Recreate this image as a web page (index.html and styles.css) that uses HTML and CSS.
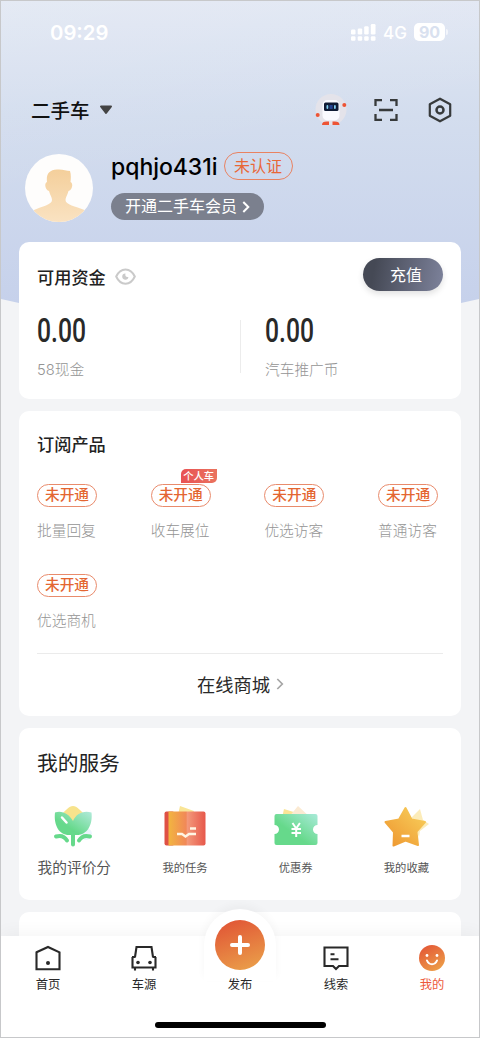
FILE: index.html
```html
<!DOCTYPE html>
<html lang="zh-CN">
<head>
<meta charset="utf-8">
<title>我的</title>
<link rel="stylesheet" href="styles.css">
</head>
<body>
<div class="phone">
  <div class="backdrop"></div>

  <header class="status">
    <span class="clock">09:29</span>
    <div class="status-right">
      <svg class="signal" width="25" height="17" viewBox="0 0 25 17" fill="#fff">
        <rect x="0" y="5.500" width="4.500" height="5" rx="1.200"/><rect x="6.700" y="4.500" width="4.500" height="6" rx="1.200"/><rect x="13.200" y="2.300" width="4.500" height="8.200" rx="1.200"/><rect x="19.800" y="0" width="4.700" height="10.500" rx="1.200"/>
        <rect x="0" y="12.300" width="4.500" height="4.400" rx="1.200"/><rect x="6.700" y="12.300" width="4.500" height="4.400" rx="1.200"/><rect x="13.200" y="12.300" width="4.500" height="4.400" rx="1.200"/><rect x="19.800" y="12.300" width="4.700" height="4.400" rx="1.200"/>
      </svg>
      <span class="network">4G</span>
      <span class="battery">90</span><i class="battery-tip"></i>
    </div>
  </header>

  <div class="topbar">
    <div class="category"><span>二手车</span>
      <svg width="14" height="10" viewBox="0 0 14 10"><path d="M2 1.500H12L7 8z" fill="#444" stroke="#444" stroke-width="2" stroke-linejoin="round"/></svg>
    </div>
    <div class="tools">
      <svg width="32" height="34" viewBox="0 0 32 34">
        <circle cx="16" cy="16.500" r="15.500" fill="#e4e3ea"/>
        <rect x="7.500" y="7" width="17" height="20.500" rx="5" fill="#fafaff"/>
        <rect x="9" y="9.500" width="14.500" height="8.500" rx="1.500" fill="#101b35"/>
        <rect x="11.500" y="12" width="1.800" height="4" rx=".9" fill="#83cff2"/><rect x="14.500" y="12" width="3.200" height="4" fill="#244291"/><rect x="19" y="12" width="1.800" height="4" rx=".9" fill="#83cff2"/>
        <circle cx="29.300" cy="12" r="2" fill="#ed5435"/><circle cx="2.700" cy="22" r="2" fill="#ed5435"/>
        <path d="M7 32c0-3 2-4 7-3.500V32zM17.500 28.500c5-.5 7 .5 7 3.500h-7z" fill="#ed5435"/>
      </svg>
      <svg width="24" height="24" viewBox="0 0 24 24" fill="none" stroke="#373a3b" stroke-width="2.300"><path d="M1.500 8V2.200H8M16 2.200h6.500V8M22.500 16v5.800H16M8 21.800H1.500V16M5 12h14"/></svg>
      <svg width="24" height="26" viewBox="0 0 24 26" fill="none" stroke="#373a3b" stroke-width="2.200"><path d="M12 1.700 22.200 7.300v11.400L12 24.300 1.800 18.700V7.300z" stroke-linejoin="round"/><circle cx="12" cy="13" r="3.500" stroke-width="2.500"/></svg>
    </div>
  </div>

  <section class="profile">
    <svg class="avatar" width="68" height="68" viewBox="0 0 68 68">
      <defs>
        <linearGradient id="skin" x1="0" y1="0" x2="0" y2="1"><stop offset="0" stop-color="#f4cf9b"/><stop offset="1" stop-color="#fae3c3"/></linearGradient>
        <clipPath id="round"><circle cx="34" cy="34" r="34"/></clipPath>
      </defs>
      <circle cx="34" cy="34" r="34" fill="#fefdfc"/>
      <path clip-path="url(#round)" d="M9 56c8-4 18-5 18-10 0-3-2-5-3-9-4-1-5-8-2-9-1-8 2-12 10-12.500 6-.5 9 1.500 13 1.500 1 3 1 7 .5 11 3 1 2 8-2 9-1 4-3 6-3 9 0 5 10 6 19 10v14H9z" fill="url(#skin)"/>
    </svg>
    <div class="identity">
      <div class="name-row"><span class="name">pqhjo431i</span><span class="verify">未认证</span></div>
      <div class="member">开通二手车会员
        <svg width="8" height="12" viewBox="0 0 8 12" fill="none" stroke="#fff" stroke-width="2"><path d="M1.300 1 6.300 6l-5 5"/></svg>
      </div>
    </div>
  </section>

  <main class="cards">
    <section class="card funds">
      <div class="funds-head">
        <h2 class="title">可用资金</h2>
        <svg class="eye" width="21" height="17" viewBox="0 0 21 17" fill="none"><path d="M1.200 8.500C5.500-1 15.500-1 19.800 8.500 15.500 18 5.500 18 1.200 8.500z" stroke="#cacaca" stroke-width="2"/><path d="M10.500 5.500A3.100 3.100 0 1 0 13.400 9C11 9.500 9.800 8 10.500 5.500z" fill="#cacaca"/></svg>
        <span class="recharge">充值</span>
      </div>
      <div class="balances">
        <div class="balance"><span class="amount">0.00</span><span class="unit">58现金</span></div>
        <div class="balance second"><span class="amount">0.00</span><span class="unit">汽车推广币</span></div>
      </div>
    </section>

    <section class="card products">
      <h2 class="title">订阅产品</h2>
      <div class="product-grid">
        <div class="product"><span class="state">未开通</span><span class="label">批量回复</span></div>
        <div class="product"><span class="state">未开通<b class="tag">个人车</b></span><span class="label">收车展位</span></div>
        <div class="product"><span class="state">未开通</span><span class="label">优选访客</span></div>
        <div class="product"><span class="state">未开通</span><span class="label">普通访客</span></div>
        <div class="product"><span class="state">未开通</span><span class="label">优选商机</span></div>
      </div>
      <div class="mall">在线商城
        <svg width="8" height="12" viewBox="0 0 8 12" fill="none" stroke="#a5a5a5" stroke-width="1.700"><path d="M1.300 1 6.300 6l-5 5"/></svg>
      </div>
    </section>

    <section class="card services">
      <h2 class="title big">我的服务</h2>
      <div class="service-grid">
        <div class="service">
          <svg class="flower" width="44" height="44" viewBox="0 0 44 44">
            <defs><linearGradient id="leaf" x1="0" y1="1" x2="1" y2="0"><stop offset=".35" stop-color="#66d98b"/><stop offset="1" stop-color="#b2eadb"/></linearGradient></defs>
            <path d="M11 11c3-3 7-8 11-8s8 5 11 8l-10 13z" fill="#f7e38c"/><circle cx="35" cy="31" r="6" fill="#edf4fd"/>
            <path d="M22 18C25 11 32 7 40.500 9.500 42 22 36 32 26 32h-8C8 32 2.500 22 4 9.500 11 7 18 11 22 18z" fill="url(#leaf)"/>
            <path d="M22 30v11.500M5 33.500c5-1.500 9 .5 11 4M39 33.500c-5-1.500-9 .5-11 4" fill="none" stroke="#66d98b" stroke-width="4" stroke-linecap="round"/>
            <path d="m11 14.500 4.500 5" stroke="#fff" stroke-width="2.500" stroke-linecap="round"/>
          </svg>
          <span class="service-name wide">我的评价分</span>
        </div>
        <div class="service">
          <svg width="44" height="44" viewBox="0 0 44 44">
            <defs><linearGradient id="book"><stop stop-color="#f2b540"/><stop offset=".48" stop-color="#f18858"/><stop offset=".5" stop-color="#f39a7b"/><stop offset="1" stop-color="#e7584b"/></linearGradient></defs>
            <path d="m17 3 14 5-3 8H14z" fill="#f9e596"/><rect x="1.500" y="8.500" width="10" height="34" rx="2" fill="#df5145"/><path d="M6 8.500H40.500a2 2 0 0 1 2 2V40.500a2 2 0 0 1-2 2H5.500V8.500z" fill="url(#book)"/>
            <path d="M14 31h5l3.500 2.500L26 31h7M27 25.500h6" fill="none" stroke="#fff6e4" stroke-width="2.300"/>
          </svg>
          <span class="service-name">我的任务</span>
        </div>
        <div class="service">
          <svg width="44" height="44" viewBox="0 0 44 44">
            <defs><linearGradient id="ticket" x1="0" y1="1" x2="1" y2="0"><stop offset=".4" stop-color="#66d98b"/><stop offset="1" stop-color="#a9ead9"/></linearGradient></defs>
            <path d="M10 6 26 11 8 15z" fill="#f9e596"/><path d="m24 3 13 12H14z" fill="#fbead2"/>
            <path d="M3 11H41.500a2 2 0 0 1 2 2V22a4.500 4.500 0 0 0 0 9v9a2 2 0 0 1-2 2H2.500a2 2 0 0 1-2-2V31a4.500 4.500 0 0 0 0-9V13a2 2 0 0 1 2-2z" fill="url(#ticket)"/>
            <path d="m18.500 20 3.700 5.500 3.700-5.500M17.500 26h9.500M17.500 30h9.500M22.200 25v9" fill="none" stroke="#fff" stroke-width="2"/>
          </svg>
          <span class="service-name">优惠券</span>
        </div>
        <div class="service">
          <svg width="44" height="44" viewBox="0 0 44 44" overflow="visible">
            <defs><linearGradient id="star" x1="1" y1="0" x2="0" y2="1"><stop offset=".1" stop-color="#f7cb58"/><stop offset="1" stop-color="#ee952f"/></linearGradient></defs>
            <path d="m27 15 9-9 3 11 6 4-9 7-1 6z" fill="#fbe5a2" opacity=".75"/>
            <path d="m21.500 5 6 11.500L41 19l-8.500 9.500L34 42l-12.500-4.500L9.500 42.500l.5-13.500L1.500 19 15 16.500z" fill="url(#star)" stroke="url(#star)" stroke-width="2" stroke-linejoin="round"/>
            <path d="M17.500 33h8" stroke="#fff" stroke-width="2.500"/>
          </svg>
          <span class="service-name">我的收藏</span>
        </div>
      </div>
    </section>
    <section class="card next"></section>
  </main>

  <nav class="tabbar">
    <div class="bump"></div>
    <div class="tabs">
      <div class="tab">
        <svg width="26" height="26" viewBox="0 0 26 26" fill="none" stroke="#292929" stroke-width="2.100"><path d="M1.500 7.300 13 2l11.500 5.300V24.300h-23z"/><circle cx="13" cy="18" r="2" fill="#292929" stroke="none"/></svg>
        <span>首页</span>
      </div>
      <div class="tab">
        <svg width="26" height="26" viewBox="0 0 26 26" fill="none" stroke="#292929" stroke-width="2.100"><path d="M4 12 5.500 2H20.500l1.500 10M1 12h3.500M21.500 12H25M1.500 12v10.500h23V12M4 22v3.500M22 22v3.500"/><circle cx="7" cy="17.500" r="1.800" fill="#292929" stroke="none"/><circle cx="19" cy="17.500" r="1.800" fill="#292929" stroke="none"/></svg>
        <span>车源</span>
      </div>
      <div class="tab publish">
        <div class="plus"><svg width="20" height="20" viewBox="0 0 20 20" stroke="#fff" stroke-width="4" stroke-linecap="round"><path d="M10 2v16M2 10h16"/></svg></div>
        <span>发布</span>
      </div>
      <div class="tab">
        <svg width="26" height="26" viewBox="0 0 26 26" fill="none" stroke="#292929" stroke-width="2.100"><path d="M1.500 2.500h23v18.500H16L13 24 10 21H1.500z"/><path d="M7.500 9.300h4M7.500 14.300h8"/></svg>
        <span>线索</span>
      </div>
      <div class="tab active">
        <svg width="26" height="26" viewBox="0 0 26 26"><defs><linearGradient id="face" x1=".2" y1="0" x2=".8" y2="1"><stop stop-color="#e35736"/><stop offset="1" stop-color="#eda049"/></linearGradient></defs><circle cx="13" cy="13" r="13" fill="url(#face)"/><circle cx="8" cy="10.500" r="1.400" fill="#fff"/><circle cx="18" cy="10.500" r="1.400" fill="#fff"/><path d="M8 15.500c2 5 8 5 10 0" fill="none" stroke="#fff" stroke-width="2" stroke-linecap="round"/></svg>
        <span>我的</span>
      </div>
    </div>
    <div class="home-indicator"></div>
  </nav>
</div>
</body>
</html>
```
FILE: styles.css
```css
* { box-sizing: border-box; }
body { margin: 0; font-family: Inter, "Noto Sans CJK SC", sans-serif; color: #292929; }
svg { display: block; flex: none; }
.phone { position: relative; width: 480px; height: 1038px; overflow: hidden; border: 1px solid #c7c8ca; background: #f3f4f6; }
.backdrop { position: absolute; inset: 0 0 auto; height: 302px; background: linear-gradient(168deg, rgba(255,255,255,.12), transparent 50%), linear-gradient(#e1e7f3 0, #d3ddee 38%, #c6d1eb 100%); clip-path: polygon(0 0, 100% 0, 100% 298px, 460px 302px, 18px 302px, 0 298px); }

.status { position: relative; display: flex; justify-content: space-between; align-items: center; height: 62px; padding: 0 31px 0 49px; color: #fff; }
.clock { font-size: 20.300px; font-weight: 600; }
.status-right { display: flex; align-items: center; }
.network { margin: 1px 0 0 7px; width: 31px; font-size: 17px; font-weight: 500; }
.battery { width: 31px; height: 18px; border-radius: 5px; background: #fff; color: #d9e1ef; font-size: 16px; line-height: 18px; font-weight: 700; text-align: center; }
.battery-tip { width: 2px; height: 6px; margin-left: 1px; border-radius: 0 2px 2px 0; background: #f2f5fb; }

.topbar { position: relative; display: flex; align-items: center; justify-content: space-between; height: 94px; padding: 0 27px 0 30px; }
.category { display: flex; align-items: center; gap: 9px; color: #111; font-size: 19.500px; font-weight: 500; }
.category span { margin-top: -2px; }
.tools { display: flex; align-items: center; gap: 27px; }
.tools svg:last-child { margin-left: 3px; }

.profile { position: relative; display: flex; gap: 18px; height: 85px; padding: 0 24px; margin-top: -4px; }
.avatar { margin-top: .5px; }
.identity { display: flex; flex-direction: column; align-items: flex-start; gap: 13px; }
.name-row { display: flex; align-items: center; gap: 6px; height: 28px; }
.name { font-size: 23px; font-weight: 500; color: #000; letter-spacing: -.03px; }
.verify { width: 69px; height: 28px; margin-top: -2px; border: 1px solid #e98261; border-radius: 14px; color: #e86737; font-size: 16px; line-height: 26px; text-align: center; }
.member { display: flex; align-items: center; gap: 5px; width: 153px; height: 27px; padding-left: 14px; margin-top: -1px; border-radius: 14px; background: #7b808e; color: #fff; font-size: 16px; line-height: 29px; }

.cards { position: relative; display: flex; flex-direction: column; gap: 12px; margin: 4px 18px 0; }
.card { border-radius: 10px; background: #fff; padding: 0 18px; }
.title { margin: 0; font-size: 17.200px; line-height: 24px; font-weight: 500; color: #222; }
.funds { height: 157px; padding-top: 16px; }
.funds-head { display: flex; align-items: center; height: 33px; }
.funds-head .title { margin-top: 6px; }
.eye { margin: 4px 0 0 9px; }
.recharge { width: 80px; height: 33px; margin-left: auto; padding-left: 6px; border-radius: 17px; background: linear-gradient(100deg, #454955 15%, #7d829b); color: #fff; font-size: 16px; line-height: 34px; text-align: center; box-shadow: 0 3px 6px rgba(0,0,0,.12); }
.balances { display: flex; height: 90px; padding-top: 22px; }
.balance { display: flex; flex-direction: column; flex: 0 0 203px; height: 64px; }
.balance.second { margin-top: 7px; height: 53px; padding-left: 24px; border-left: 1px solid #ececec; }
.second .amount { margin-top: -7px; }
.amount { font-family: Roboto, sans-serif; font-size: 32.500px; line-height: 36px; font-weight: 500; transform: scaleX(.76); transform-origin: left; }
.unit { margin-top: 10px; color: #949494; font-size: 14.700px; line-height: 22px; font-weight: 300; }

.products { height: 305px; padding-top: 22px; }
.product-grid { display: grid; grid-template-columns: repeat(4, 113.700px); grid-template-rows: 89.500px 79px; margin-top: 27px; height: 168.500px; width: 100%; }
.product { display: flex; flex-direction: column; align-items: flex-start; }
.state { position: relative; width: 60px; height: 23px; border: 1px solid #e98b6c; border-radius: 12px; color: #e46631; font-size: 14.700px; line-height: 21px; font-weight: 500; text-align: center; }
.label { margin-top: 13px; color: #949494; font-size: 14.700px; line-height: 22px; font-weight: 300; }
.tag { position: absolute; left: 29px; top: -16px; width: 36px; height: 14px; border-radius: 5px 0 5px 0; background: linear-gradient(90deg, #e85254, #ea735e); color: #fff; font-size: 10.300px; line-height: 14px; font-weight: 500; white-space: nowrap; }
.mall { display: flex; align-items: center; justify-content: center; gap: 6px; height: 62px; border-top: 1px solid #ebebeb; font-size: 18.300px; padding-left: 1px; }

.services { height: 172px; padding-top: 21px; }
.title.big { font-size: 20.700px; line-height: 30px; font-weight: 400; }
.service-grid { display: grid; grid-template-columns: repeat(4, 110.700px); margin: 24px -18px 0; }
.service { display: flex; flex-direction: column; align-items: center; }
.flower { margin-right: 3px; }
.service-name { margin-top: 10px; color: #555; font-size: 11.300px; line-height: 22px; white-space: nowrap; }
.service-name.wide { font-size: 14.700px; }
.next { height: 50px; }

.tabbar { position: absolute; left: 0; right: 0; bottom: 0; height: 101px; background: #fff; box-shadow: 0 -3px 16px rgba(0,0,0,.045); }
.bump { position: absolute; left: 203px; top: -27px; width: 72px; height: 72px; border-radius: 36px 36px 0 0; background: #fff; box-shadow: 0 -4px 8px rgba(0,0,0,.035); }
.tabs { position: relative; display: grid; grid-template-columns: repeat(5, 96px); height: 86px; margin: 0 -1px; padding-top: 9px; }
.tab { display: flex; flex-direction: column; align-items: center; gap: 4px; font-size: 12.300px; line-height: 19px; }
.publish { margin-top: -25px; }
.plus { display: grid; place-items: center; width: 50px; height: 50px; margin-bottom: 1px; border-radius: 50%; background: linear-gradient(160deg, #e05034, #eba44b); }
.active { color: #ed593b; }
.home-indicator { width: 171px; height: 6px; margin: 0 auto; border-radius: 3px; background: #000; }
```
